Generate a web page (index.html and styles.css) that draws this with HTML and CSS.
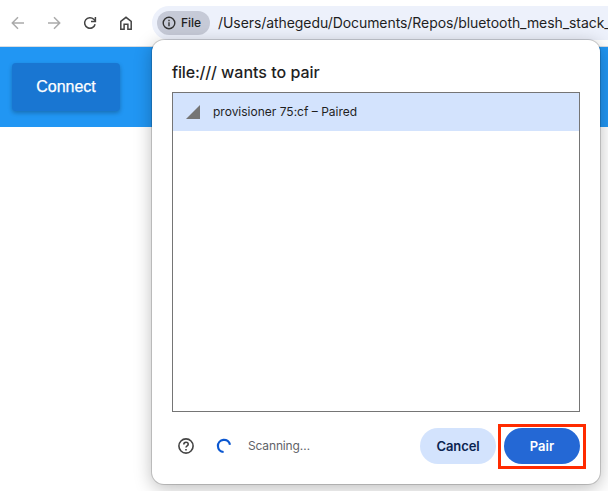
FILE: index.html
```html
<!DOCTYPE html>
<html lang="en">
<head>
<meta charset="utf-8">
<title>Bluetooth pairing</title>
<link rel="stylesheet" href="styles.css">
</head>
<body>
<header class="toolbar">
  <nav class="nav">
    <svg class="dim" viewBox="0 0 16 16"><path d="M14 8H2.5M8 2.3 2.3 8 8 13.7"/></svg>
    <svg class="dim" viewBox="0 0 16 16"><path d="M2 8h11.5M8 2.3 13.7 8 8 13.7"/></svg>
    <svg viewBox="0 0 16 16"><path d="M13.1 9.2A5.3 5.3 0 1 1 11.8 4.3L13.4 6"/><path d="M13.4 2v4.4H9"/></svg>
    <svg viewBox="0 0 16 16"><path d="M2.8 6.3 8 2.3l5.2 4v7.9H9.9V9.3H6.1v4.9H2.8Z"/></svg>
  </nav>
  <div class="address">
    <span class="chip"><svg viewBox="0 0 14 14"><circle cx="7" cy="7" r="5.8"/><path d="M7 6.3v3.9M7 3.8v1.4"/></svg><span>File</span></span>
    <span class="url">/Users/athegedu/Documents/Repos/bluetooth_mesh_stack_</span>
  </div>
</header>
<main class="page">
  <div class="banner"><button class="connect">Connect</button></div>
</main>
<section class="dialog" role="dialog">
  <h1><span class="origin">file:///</span> wants to pair</h1>
  <div class="devices">
    <div class="device">
      <svg viewBox="0 0 14 14"><path d="M14 0v14H0Z"/></svg>
      <span>provisioner 75:cf – Paired</span>
    </div>
  </div>
  <footer class="actions">
    <svg class="help" viewBox="0 0 16 16"><circle cx="8" cy="8" r="7.1"/><path d="M5.8 6.5C5.8 3.5 10.2 3.6 10.2 6.2 10.2 7.8 8 7.8 8 9.6M8 10.9v1.5"/></svg>
    <svg class="spinner" viewBox="0 0 16 16"><path d="M7.6 14A6.1 6.1 0 1 1 14 6.7"/></svg>
    <span class="status">Scanning…</span>
    <button class="cancel">Cancel</button>
    <span class="highlight"><button class="pair">Pair</button></span>
  </footer>
</section>
</body>
</html>
```
FILE: styles.css
```css
* { box-sizing: border-box; }
body {
  margin: 0;
  width: 608px;
  height: 491px;
  overflow: hidden;
  position: relative;
  background: #fff;
  color: #1f1f1f;
  font-family: Inter, "Liberation Sans", sans-serif;
}
button { border: 0; padding: 0; font-family: inherit; }
svg { display: block; flex: none; fill: none; }
.toolbar {
  display: flex;
  height: 47px;
  border-bottom: 1px solid #d9dde2;
}
.nav {
  display: flex;
  gap: 20px;
  width: 152px;
  padding: 15px 0 0 10px;
}
.nav svg { width: 16px; height: 16px; stroke: #444; stroke-width: 1.5; }
.nav .dim { stroke: #aaa; }
.address {
  display: flex;
  align-items: center;
  width: 456px;
  height: 34px;
  margin-top: 6px;
  padding-left: 5px;
  border-radius: 17px 0 0 17px;
  background: #edf1fb;
  overflow: hidden;
}
.chip {
  display: flex;
  align-items: center;
  gap: 5px;
  flex: none;
  width: 53px;
  height: 24px;
  padding-left: 5px;
  border-radius: 12px;
  background: #c6cad7;
  font-size: 12px;
  font-weight: 500;
}
.chip span { padding-bottom: 1px; }
.chip svg { width: 14px; height: 14px; stroke: #333; stroke-width: 1.4; }
.url {
  margin-left: 8px;
  padding-bottom: 1px;
  white-space: nowrap;
  font-size: 14px;
  letter-spacing: -0.07px;
}
.banner {
  height: 80px;
  padding: 16px 12px;
  background: #2196f3;
}
.connect {
  display: block;
  width: 108px;
  height: 48px;
  border-radius: 4px;
  background: #1976d2;
  box-shadow: 0 2px 4px rgba(0, 0, 0, .25);
  color: #fff;
  font: 16px "Liberation Sans", sans-serif;
  -webkit-text-stroke: .25px #fff;
}
.dialog {
  position: absolute;
  left: 152px;
  top: 40px;
  width: 448px;
  height: 444px;
  padding: 20px;
  border-radius: 12px;
  background: #fff;
  box-shadow: 0 0 0 1px rgba(0, 0, 0, .16), 0 4px 18px rgba(0, 0, 0, .27);
}
h1 {
  height: 32px;
  margin: 0;
  font-size: 16px;
  line-height: 25px;
  font-weight: 500;
  white-space: nowrap;
}
.origin { letter-spacing: -0.17px; }
.devices {
  height: 320px;
  border: 1px solid #757575;
}
.device {
  display: flex;
  align-items: center;
  gap: 13px;
  height: 38px;
  padding-left: 13px;
  background: #d3e3fd;
  font-size: 12px;
}
.device span { padding-bottom: 2px; }
.device svg { width: 14px; height: 14px; fill: #757575; }
.actions {
  display: flex;
  align-items: center;
  height: 36px;
  margin: 16px -6px 0 6px;
}
.help { width: 16px; height: 16px; stroke: #444; stroke-width: 1.6; }
.spinner { width: 16px; height: 16px; margin-left: 22px; stroke: #0b57d0; stroke-width: 2.2; }
.status {
  width: 172px;
  margin-left: 16px;
  padding-bottom: 1px;
  color: #5f6368;
  font-size: 12px;
  letter-spacing: -0.15px;
}
.cancel, .pair {
  flex: none;
  width: 76px;
  height: 36px;
  border-radius: 18px;
  font-size: 13px;
  font-weight: 600;
}
.cancel { background: #d3e3fd; color: #0b2450; letter-spacing: -0.1px; }
.highlight {
  flex: none;
  display: flex;
  align-items: center;
  justify-content: center;
  width: 88px;
  height: 45px;
  margin-left: 2px;
  border: 3px solid #ff2b00;
}
.pair { background: #2468d5; color: #fff; }
```
